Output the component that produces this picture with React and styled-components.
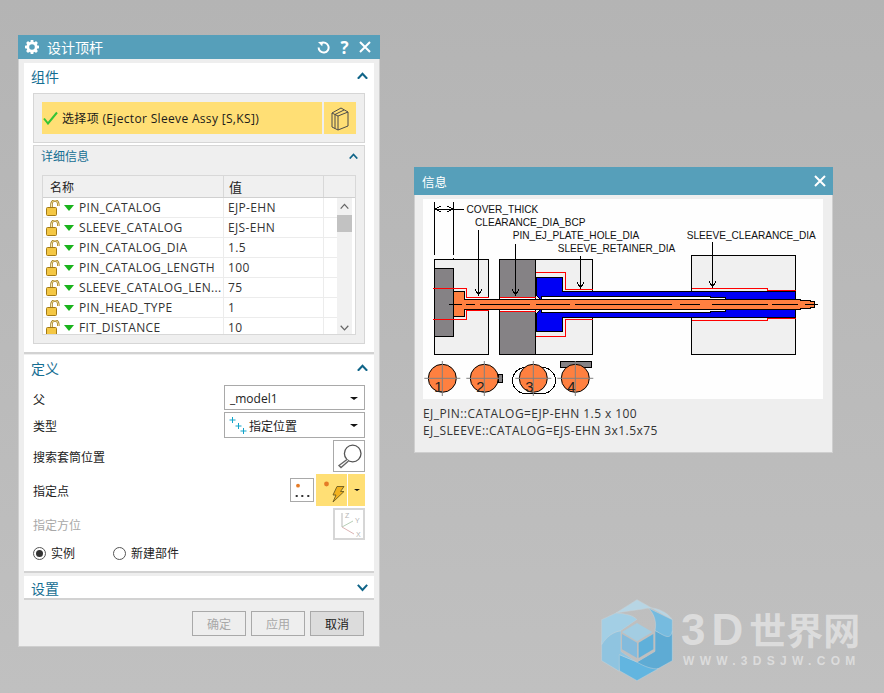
import React from "react";
import styled, { createGlobalStyle } from "styled-components";

const FONT = `"Open Sans", "Noto Sans CJK SC", sans-serif`;

const Global = createGlobalStyle`
  html, body { margin: 0; padding: 0; height: 693px; overflow: hidden; }
  body { font-family: ${FONT}; font-size: 12px; color: #222; }
`;

const Desktop = styled.div`
  position: relative;
  width: 884px;
  height: 693px;
  overflow: hidden;
  background: linear-gradient(#b4b4b4, #c0c0c0);
`;

const Win = styled.div`
  position: absolute;
  left: ${(p) => p.$left}px;
  top: ${(p) => p.$top}px;
  width: ${(p) => p.$width}px;
  height: ${(p) => p.$height}px;
  box-sizing: border-box;
  display: flex;
  flex-direction: column;
  background: #eeeeee;
  border: 1px solid #cfcfcf;
  border-top: none;
`;

const TitleBar = styled.div`
  height: ${(p) => p.$h}px;
  flex: none;
  margin: 0 -1px;
  display: flex;
  align-items: center;
  padding: 0 ${(p) => p.$pr}px 0 ${(p) => p.$pl}px;
  gap: 8px;
  background: #569fba;
  color: #fff;
  font-size: ${(p) => p.$fs}px;
`;
const TitleText = styled.span`
  flex: 1;
`;
const TitleTools = styled.div`
  display: flex;
  align-items: center;
  gap: 9px;
`;
const HelpMark = styled.span`
  font: 700 17px/1 "Open Sans", sans-serif;
  width: 11px;
  text-align: center;
`;

const DialogBody = styled.div`
  flex: 1;
  display: flex;
  flex-direction: column;
  padding: 4px 5px 0;
`;

const Section = styled.section`
  flex: none;
  height: ${(p) => p.$h}px;
  margin-bottom: ${(p) => p.$mb}px;
  box-sizing: border-box;
  background: #fff;
  border-bottom: 2px solid #d2d2d2;
  display: flex;
  flex-direction: column;
  padding: 0 9px;
`;
const SectionHeader = styled.div`
  height: ${(p) => p.$h}px;
  flex: none;
  box-sizing: border-box;
  margin: 0 -3px 0 -2px;
  padding-bottom: ${(p) => p.$pb ?? 0}px;
  display: flex;
  align-items: center;
  justify-content: space-between;
  color: #156e92;
  font-size: 14px;
`;

const Group = styled.div`
  box-sizing: border-box;
  background: #efefef;
  border: 1px solid #d6d6d6;
  height: ${(p) => p.$h}px;
  padding: ${(p) => p.$pad};
  margin-top: ${(p) => p.$mt ?? 0}px;
  flex: none;
`;
const PickRow = styled.div`
  display: flex;
  gap: 2px;
  height: 32px;
`;
const PickBar = styled.div`
  flex: 1;
  display: flex;
  align-items: center;
  gap: 4px;
  background: #ffdf75;
  font-size: 12px;
  letter-spacing: 0.33px;
  padding-left: 1px;
  color: #1a1a1a;
`;
const PickIcon = styled.div`
  width: 32px;
  display: flex;
  align-items: center;
  justify-content: center;
  background: #ffdf75;
`;
const GroupHeader = styled.div`
  height: 29px;
  margin: 0 -2px 0 -1px;
  display: flex;
  align-items: center;
  justify-content: space-between;
  color: #156e92;
  font-size: 12px;
  padding-bottom: 9px;
  box-sizing: border-box;
`;

const Table = styled.div`
  box-sizing: border-box;
  height: 160px;
  background: #fff;
  border: 1px solid #d8d8d8;
  overflow: hidden;
`;
const HeadRow = styled.div`
  height: 22px;
  box-sizing: border-box;
  display: grid;
  grid-template-columns: 181px 100px 1fr;
  background: #f0f0f0;
  border-bottom: 1px solid #d0d0d0;
`;
const HeadCell = styled.div`
  display: flex;
  align-items: center;
  padding-left: 7px;
  border-right: 1px solid #d8d8d8;
  font-size: 12px;
  &:nth-child(2) { padding-left: 5px; font-size: 13px; }
  &:last-child { border-right: none; }
`;
const TableMain = styled.div`
  display: flex;
  height: 136px;
`;
const Rows = styled.div`
  width: 294px;
  flex: none;
  overflow: hidden;
`;
const Row = styled.div`
  height: 20px;
  box-sizing: border-box;
  display: grid;
  grid-template-columns: 181px 100px 1fr;
  border-bottom: 1px solid #ececec;
  font-size: 12px;
  line-height: 19px;
  letter-spacing: 0.33px;
`;
const NameCell = styled.div`
  display: flex;
  align-items: center;
  padding-left: 2px;
  border-right: 1px solid #ececec;
  color: #333;
  white-space: nowrap;
  overflow: hidden;
`;
const ValueCell = styled.div`
  padding-left: 4px;
  border-right: 1px solid #ececec;
  color: #333;
`;
const GreenDown = styled.span`
  flex: none;
  width: 0;
  height: 0;
  margin: 0 5px 0 3px;
  border-left: 5.5px solid transparent;
  border-right: 5.5px solid transparent;
  border-top: 6px solid #19b31c;
`;
const Scrollbar = styled.div`
  width: 15px;
  flex: none;
  background: #f1f1f1;
  position: relative;
  display: flex;
  flex-direction: column;
  justify-content: space-between;
  align-items: center;
  padding: 5px 0 3px;
  box-sizing: border-box;
`;
const Thumb = styled.div`
  position: absolute;
  left: 0;
  right: 0;
  top: 17px;
  height: 17px;
  background: #c2c2c2;
`;

const FormRow = styled.div`
  flex: none;
  height: ${(p) => p.$h}px;
  margin-bottom: 2px;
  display: flex;
  align-items: center;
  justify-content: space-between;
  font-size: 12px;
  color: ${(p) => (p.$disabled ? "#a8a8a8" : "#222")};
`;
const FieldLabel = styled.span`
  padding-top: 2px;
`;
const Select = styled.div`
  width: 141px;
  height: 100%;
  box-sizing: border-box;
  border: 1px solid #a9a9a9;
  background: #fff;
  display: flex;
  align-items: center;
  padding: 1px 6px 0 4px;
  gap: 2px;
  font-size: 12px;
`;
const SelectText = styled.span`
  flex: 1;
  padding-left: ${(p) => p.$pl ?? 0}px;
`;
const Caret = styled.span`
  flex: none;
  width: 0;
  height: 0;
  border-left: ${(p) => p.$s}px solid transparent;
  border-right: ${(p) => p.$s}px solid transparent;
  border-top: ${(p) => p.$s * 0.75}px solid #111;
`;
const IconButton = styled.div`
  width: ${(p) => p.$size ?? 32}px;
  height: ${(p) => p.$size ?? 32}px;
  box-sizing: border-box;
  border: ${(p) => (p.$disabled ? "2px solid #d6d6d6" : "1px solid #a9a9a9")};
  background: #fff;
  display: flex;
  align-items: center;
  justify-content: center;
  flex: none;
`;
const PointTools = styled.div`
  display: flex;
  align-items: center;
  gap: 2px;
`;
const YellowSplit = styled.div`
  width: 49px;
  height: 32px;
  display: flex;
  background: #ffdf75;
`;
const YellowMain = styled.div`
  width: 31px;
  display: flex;
  align-items: center;
  justify-content: center;
  border-right: 1px solid #fff;
`;
const YellowDrop = styled.div`
  flex: 1;
  display: flex;
  align-items: center;
  justify-content: center;
`;
const RadioRow = styled.div`
  display: flex;
  align-items: center;
  height: 14px;
  margin-top: 4px;
  font-size: 12px;
`;
const Radio = styled.span`
  width: 13px;
  height: 13px;
  box-sizing: border-box;
  border: 1px solid #555;
  border-radius: 50%;
  background: #fff;
  display: flex;
  align-items: center;
  justify-content: center;
  margin-right: 5px;
  flex: none;
  &::after {
    content: "";
    width: 7px;
    height: 7px;
    border-radius: 50%;
    background: ${(p) => (p.$on ? "#333" : "transparent")};
  }
`;
const RadioLabel = styled.span`
  width: ${(p) => p.$w}px;
`;

const Footer = styled.div`
  flex: 1;
  display: flex;
  justify-content: flex-end;
  gap: 5px;
  padding: 11px 10px 0 0;
`;
const FootButton = styled.div`
  width: 54px;
  height: 25px;
  box-sizing: border-box;
  display: flex;
  align-items: center;
  justify-content: center;
  border: 1px solid #a9a9a9;
  background: ${(p) => (p.$disabled ? "#eeeeee" : "#dcdcdc")};
  color: ${(p) => (p.$disabled ? "#a8a8a8" : "#222")};
  font-size: 12px;
`;

const InfoBody = styled.div`
  flex: 1;
  padding: 4px 8px 0;
`;
const InfoFigure = styled.svg`
  display: block;
  width: 400px;
  height: 200px;
  background: #fefefe;
  font-family: "Liberation Sans", Arial, sans-serif;
`;
const InfoLines = styled.div`
  padding-top: 6px;
  font-size: 12px;
  line-height: 17px;
  letter-spacing: 0.42px;
  color: #333;
`;

const Watermark = styled.div`
  position: absolute;
  left: 600px;
  top: 598px;
  display: flex;
  align-items: flex-start;
  gap: 6px;
  pointer-events: none;
`;
const MarkText = styled.div`
  display: flex;
  flex-direction: column;
  padding-top: 12px;
  color: #dcdcdc;
`;
const MarkName = styled.div`
  font: 700 37px/38px "Noto Sans CJK SC", sans-serif;
  white-space: nowrap;
`;
const MarkLatin = styled.span`
  font-family: "Liberation Sans", sans-serif;
  letter-spacing: 6px;
  font-size: 44px;
`;
const MarkUrl = styled.div`
  font: 700 12px/14px "Liberation Sans", sans-serif;
  letter-spacing: 5.3px;
  white-space: nowrap;
  margin-top: 5px;
  padding-left: 2px;
`;

const Chevron = ({ up = true, size = 11, sw = 2.4, color = "#0f6488" }) => (
  <svg width={size} height={size * 0.7} viewBox="0 0 13 9">
    <path d={up ? "M1 8 L6.5 2 L12 8" : "M1 1 L6.5 7 L12 1"} fill="none" stroke={color} strokeWidth={sw} />
  </svg>
);

const GearIcon = () => (
  <svg width="14" height="14" viewBox="0 0 14 14" fill="#fff">
    <circle cx="7" cy="7" r="4.2" fill="none" stroke="#fff" strokeWidth="2.8" />
    {[0, 45, 90, 135, 180, 225, 270, 315].map((a) => (
      <rect key={a} x="5.6" y="0" width="2.8" height="3" transform={`rotate(${a} 7 7)`} />
    ))}
  </svg>
);
const RefreshIcon = () => (
  <svg width="13" height="13" viewBox="0 0 13 13">
    <path d="M4.2 2.2 A5 5 0 1 1 1.6 6.5" fill="none" stroke="#fff" strokeWidth="2" />
    <path d="M1 1 L6 0.8 L5.2 5.2 Z" fill="#fff" />
  </svg>
);
const CloseIcon = ({ size = 12 }) => (
  <svg width={size} height={size} viewBox="0 0 12 12">
    <path d="M1 1 L11 11 M11 1 L1 11" stroke="#fff" strokeWidth="2" />
  </svg>
);
const CheckIcon = () => (
  <svg width="15" height="14" viewBox="0 0 15 14">
    <path d="M1 7.5 L5 12.5 L14 1.5" fill="none" stroke="#35c435" strokeWidth="2" />
  </svg>
);
const BooksIcon = () => (
  <svg width="18" height="25" viewBox="0 0 18 25" fill="none" stroke="#4b4b4b" strokeWidth="1">
    <path d="M1 7 L7 10 V24 L1 21 Z" />
    <path d="M7 10 L17 6 V20 L7 24" />
    <path d="M4 8.5 V22.5" />
    <path d="M1 7 L10 2 L17 6 M4 8.5 L13 4" />
  </svg>
);
const LockIcon = () => (
  <svg width="16" height="16" viewBox="0 0 16 16" style={{ flex: "none" }}>
    <path d="M6.5 7.5 V4 A3.4 3.4 0 0 1 13.3 4 V6" fill="none" stroke="#9a7414" strokeWidth="2.4" />
    <path d="M6.5 7.5 V4 A3.4 3.4 0 0 1 13.3 4 V6" fill="none" stroke="#f8e7a5" strokeWidth="1" />
    <rect x="1.5" y="7.5" width="10" height="8" rx="1" fill="#f4c744" stroke="#a37a16" />
  </svg>
);
const PlusTrio = () => (
  <svg width="18" height="20" viewBox="0 0 18 20" stroke="#13a3c9" strokeWidth="1" style={{ flex: "none" }}>
    <path d="M3.5 1 V7 M0.5 4 H6.5 M9.5 7 V13 M6.5 10 H12.5 M14.5 12 V18 M11.5 15 H17.5" />
  </svg>
);
const Magnifier = () => (
  <svg width="26" height="26" viewBox="0 0 26 26" fill="none">
    <circle cx="16.7" cy="10.5" r="8.3" stroke="#555" strokeWidth="1.3" />
    <path d="M11 16.5 L3 22.5 L5 24.5 L12.5 18" stroke="#666" strokeWidth="1.4" fill="#fff" />
  </svg>
);
const DotsIcon = () => (
  <svg width="18" height="18" viewBox="0 0 18 18">
    <circle cx="5" cy="4.7" r="1.9" fill="#e57b27" />
    <path d="M2.7 14 h2 v2 h-2z M8.3 14 h2 v2 h-2z M14.3 14 h2 v2 h-2z" fill="#333" />
  </svg>
);
const BoltIcon = () => (
  <svg width="26" height="26" viewBox="0 0 26 26">
    <circle cx="7.5" cy="7" r="2.4" fill="#e57b27" />
    <path d="M18 9.5 H25 L21.5 14.5 H25 L14 25 L17 18 H14 Z" fill="#f2b21f" stroke="#6b5a20" strokeWidth="0.9" />
  </svg>
);
const AxesIcon = () => (
  <svg width="26" height="28" viewBox="0 0 26 28" fill="none" strokeWidth="1">
    <path d="M6 3 V17" stroke="#b9b9b9" />
    <path d="M6 17 L17 11" stroke="#b7cfb7" />
    <path d="M6 17 L18 24" stroke="#dcb4b4" />
    <text x="9" y="8" fontSize="7" fill="#b5b5b5" stroke="none" fontFamily="Liberation Sans">Z</text>
    <text x="19" y="13" fontSize="7" fill="#b5b5b5" stroke="none" fontFamily="Liberation Sans">Y</text>
    <text x="20" y="27" fontSize="7" fill="#b5b5b5" stroke="none" fontFamily="Liberation Sans">X</text>
  </svg>
);

const rows = [
  ["PIN_CATALOG", "EJP-EHN"],
  ["SLEEVE_CATALOG", "EJS-EHN"],
  ["PIN_CATALOG_DIA", "1.5"],
  ["PIN_CATALOG_LENGTH", "100"],
  ["SLEEVE_CATALOG_LEN...", "75"],
  ["PIN_HEAD_TYPE", "1"],
  ["FIT_DISTANCE", "10"],
];

const Arrow = ({ x, y1, y2 }) => (
  <g stroke="#000" fill="none">
    <path d={`M${x} ${y1} V${y2}`} />
    <path d={`M${x - 3.5} ${y2 - 6} L${x} ${y2} L${x + 3.5} ${y2 - 6}`} />
  </g>
);
const Mark = ({ cx, n, dx = -8 }) => (
  <g>
    <circle cx={cx} cy="378.3" r="14" fill="#ff8040" stroke="#000" />
    <text x={cx + dx} y="391.5" fontSize="15" fill="#222">{n}</text>
    <path d={`M${cx - 18} 378.3 H${cx + 18} M${cx} 361 V396`} stroke="#808080" />
  </g>
);

const Figure = () => (
  <InfoFigure viewBox="423 199 400 200" shapeRendering="crispEdges">
    <g fontSize="10.1" fill="#111">
      <text x="466.5" y="213">COVER_THICK</text>
      <text x="475" y="226">CLEARANCE_DIA_BCP</text>
      <text x="512.7" y="239">PIN_EJ_PLATE_HOLE_DIA</text>
      <text x="557.7" y="252">SLEEVE_RETAINER_DIA</text>
      <text x="686.7" y="239">SLEEVE_CLEARANCE_DIA</text>
    </g>
    <g stroke="#000" fill="none">
      <path d="M434.5 202 V255 M453.5 202 V255 M453.5 258 V266" />
      <path d="M435 209 H463.5" />
      <path d="M441 206 L435.5 209 L441 212 M447 206 L453 209 L447 212" />
    </g>
    <g stroke="#000">
      <rect x="434.5" y="259.5" width="54" height="95" fill="#f0f0f0" />
      <rect x="434.5" y="268.5" width="19" height="68" fill="#858285" />
      <rect x="535.5" y="259.5" width="57" height="95" fill="#f0f0f0" />
      <rect x="499.5" y="259.5" width="36" height="95" fill="#858285" />
      <rect x="691.5" y="255.5" width="104" height="99" fill="#f0f0f0" />
    </g>
    <rect x="465" y="297" width="24" height="14" fill="#fff" />
    <rect x="500" y="297" width="35" height="14" fill="#fff" />
    <path d="M536 277.5 H562.5 V291.5 H795.5 V317.5 H562.5 V331.5 H536 V314 L541 309 V300 L536 295 Z" fill="#0000f5" stroke="#000" />
    <path d="M541 296.5 H710 V297.5 H725 V299 H734 V309.5 H725 V311 H710 V312.5 H541 Z" fill="#fff" stroke="#000" />
    <g fill="none" stroke="#f00" strokeWidth="1">
      <path d="M433 288.5 H466.5 V297.5 H488.5 M433 319.5 H466.5 V310.5 H488.5" />
      <path d="M499.5 297.5 H535.5 M499.5 311 H535.5" />
      <path d="M535.5 272.5 H565 V289.5 H592.5 M535.5 336.5 H565 V319.5 H592.5" />
      <path d="M692 288.5 H767.5 V290.5 H795.5 M692 320.5 H767.5 V318.5 H795.5" />
    </g>
    <path d="M453.5 291.5 H464.5 V299.5 H800.5 V300.5 H810 V301.5 H814.5 V307.5 H810 V308.5 H800.5 V309.5 H464.5 V316.5 H453.5 Z" fill="#ff8040" stroke="#000" />
    <path d="M449 304.5 H462 M466 304.5 H475 M480 304.5 H530 M536 304.5 H570 M575 304.5 H672 M680 304.5 H700 M712 304.5 H768 M772 304.5 H798 M805 304.5 H818" stroke="#000" />
    <Arrow x={478.5} y1={230} y2={295} />
    <Arrow x={515.5} y1={244} y2={295} />
    <Arrow x={580.5} y1={256} y2={288} />
    <Arrow x={712.5} y1={242} y2={287} />
    <rect x="498.5" y="374.5" width="4" height="8" fill="#858285" stroke="#000" />
    <rect x="512.5" y="367.5" width="43" height="26" rx="13" fill="#fff" stroke="#000" />
    <rect x="560.5" y="361.5" width="31" height="5.5" fill="#858285" stroke="#000" />
    <g shapeRendering="auto">
      <Mark cx={442.3} n="1" />
      <Mark cx={484.3} n="2" />
      <Mark cx={533.3} n="3" />
      <Mark cx={575.3} n="4" />
    </g>
  </InfoFigure>
);

const Logo = () => (
  <svg width="75" height="85" viewBox="30 20 225 255">
    <g stroke="#c6d2d8" strokeWidth="1.5">
      <path d="M141 25 L247 85 C232 62 200 48 175 50 C150 55 120 58 78 65 Z" fill="#b7d5e4" />
      <path d="M175 50 L247 85 V208 C240 165 220 130 195 118 C200 95 195 70 175 50 Z" fill="#76bbdf" />
      <path d="M247 120 V208 L190 240 C165 232 150 222 141 212 L195 180 V118 C220 130 240 150 247 120 Z" fill="#5eabd4" />
      <path d="M85 188 L141 212 C160 225 190 235 205 232 L141 268 L88 238 C85 222 85 205 85 188 Z" fill="#62b5e0" />
      <path d="M35 150 C50 130 75 120 93 118 V180 L141 212 L88 190 V240 L35 208 Z" fill="#8fc4e0" />
      <path d="M35 85 L78 65 C110 68 130 72 141 85 L93 118 C70 122 50 135 35 160 Z" fill="#a3cfe5" />
    </g>
    <path d="M141 85 L195 118 V180 L141 212 L93 180 V118 Z" fill="#bfbfbf" />
    <path d="M141 95 L187 122 L141 150 L96 122 Z" fill="#a3cde2" />
    <path d="M96 128 L141 154 V200 L96 174 Z" fill="#84bbdc" />
    <path d="M146 154 L190 128 V174 L146 200 Z" fill="#5fb0da" />
  </svg>
);

export default function App() {
  return (
    <Desktop>
      <Global />
      <Win $left={18} $top={35} $width={362} $height={612}>
        <TitleBar $h={24} $pl={7} $pr={9} $fs={14}>
          <GearIcon />
          <TitleText>设计顶杆</TitleText>
          <TitleTools>
            <RefreshIcon />
            <HelpMark>?</HelpMark>
            <CloseIcon />
          </TitleTools>
        </TitleBar>
        <DialogBody>
          <Section $h={291} $mb={1}>
            <SectionHeader $h={30} $pb={5}>
              <span>组件</span>
              <Chevron />
            </SectionHeader>
            <Group $h={50} $pad="8px">
              <PickRow>
                <PickBar>
                  <CheckIcon />
                  <span>选择项 (Ejector Sleeve Assy [S,KS])</span>
                </PickBar>
                <PickIcon><BooksIcon /></PickIcon>
              </PickRow>
            </Group>
            <Group $h={199} $pad="0 8px" $mt={2}>
              <GroupHeader>
                <span>详细信息</span>
                <Chevron size={9} sw={2.4} />
              </GroupHeader>
              <Table>
                <HeadRow>
                  <HeadCell>名称</HeadCell>
                  <HeadCell>值</HeadCell>
                  <HeadCell />
                </HeadRow>
                <TableMain>
                  <Rows>
                    {rows.map(([n, v]) => (
                      <Row key={n}>
                        <NameCell>
                          <LockIcon />
                          <GreenDown />
                          <span>{n}</span>
                        </NameCell>
                        <ValueCell>{v}</ValueCell>
                      </Row>
                    ))}
                  </Rows>
                  <Scrollbar>
                    <Chevron size={9} sw={1.8} color="#666" />
                    <Thumb />
                    <Chevron up={false} size={9} sw={1.8} color="#666" />
                  </Scrollbar>
                </TableMain>
              </Table>
            </Group>
          </Section>
          <Section $h={218} $mb={3}>
            <SectionHeader $h={30} $pb={5}>
              <span>定义</span>
              <Chevron />
            </SectionHeader>
            <FormRow $h={25}>
              <FieldLabel>父</FieldLabel>
              <Select>
                <SelectText $pl={1}>_model1</SelectText>
                <Caret $s={4} />
              </Select>
            </FormRow>
            <FormRow $h={26}>
              <FieldLabel>类型</FieldLabel>
              <Select>
                <PlusTrio />
                <SelectText>指定位置</SelectText>
                <Caret $s={4} />
              </Select>
            </FormRow>
            <FormRow $h={32}>
              <FieldLabel>搜索套筒位置</FieldLabel>
              <IconButton><Magnifier /></IconButton>
            </FormRow>
            <FormRow $h={32}>
              <FieldLabel>指定点</FieldLabel>
              <PointTools>
                <IconButton $size={24}><DotsIcon /></IconButton>
                <YellowSplit>
                  <YellowMain><BoltIcon /></YellowMain>
                  <YellowDrop><Caret $s={3} /></YellowDrop>
                </YellowSplit>
              </PointTools>
            </FormRow>
            <FormRow $h={32} $disabled>
              <FieldLabel>指定方位</FieldLabel>
              <IconButton $disabled><AxesIcon /></IconButton>
            </FormRow>
            <RadioRow>
              <Radio $on />
              <RadioLabel $w={62}>实例</RadioLabel>
              <Radio />
              <span>新建部件</span>
            </RadioRow>
          </Section>
          <Section $h={24} $mb={0}>
            <SectionHeader $h={24}>
              <span>设置</span>
              <Chevron up={false} />
            </SectionHeader>
          </Section>
          <Footer>
            <FootButton $disabled>确定</FootButton>
            <FootButton $disabled>应用</FootButton>
            <FootButton>取消</FootButton>
          </Footer>
        </DialogBody>
      </Win>

      <Win $left={414} $top={167} $width={419} $height={286}>
        <TitleBar $h={28} $pl={8} $pr={7} $fs={12.5}>
          <TitleText>信息</TitleText>
          <CloseIcon />
        </TitleBar>
        <InfoBody>
          <Figure />
          <InfoLines>
            <div>EJ_PIN::CATALOG=EJP-EHN 1.5 x 100</div>
            <div>EJ_SLEEVE::CATALOG=EJS-EHN 3x1.5x75</div>
          </InfoLines>
        </InfoBody>
      </Win>

      <Watermark>
        <Logo />
        <MarkText>
          <MarkName><MarkLatin>3D</MarkLatin>世界网</MarkName>
          <MarkUrl>WWW.3DSJW.COM</MarkUrl>
        </MarkText>
      </Watermark>
    </Desktop>
  );
}
